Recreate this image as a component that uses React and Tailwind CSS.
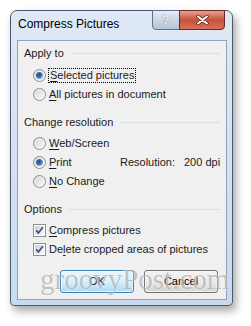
import React from 'react';

const font = { fontFamily: '"Liberation Sans", Arial, sans-serif' };

const Radio = ({ checked }) => (
  <svg width="13" height="13" viewBox="0 0 13 13" className="shrink-0">
    <defs>
      <linearGradient id="radioFill" x1="0" y1="0" x2="1" y2="1">
        <stop offset="0" stopColor="#cfcfcf" />
        <stop offset="1" stopColor="#ffffff" />
      </linearGradient>
      <radialGradient id="radioDot" cx="0.4" cy="0.4" r="0.6">
        <stop offset="0" stopColor="#2b4e7e" />
        <stop offset="0.55" stopColor="#3d6aa3" />
        <stop offset="1" stopColor="#8bbde6" />
      </radialGradient>
    </defs>
    <circle cx="6.5" cy="6.5" r="6" fill="url(#radioFill)" stroke="#8c8f93" />
    <circle cx="6.5" cy="6.5" r="4.5" fill="none" stroke="#f4f4f4" strokeWidth="0.8" />
    {checked && <circle cx="6.5" cy="6.5" r="3.6" fill="url(#radioDot)" />}
  </svg>
);

const Check = () => (
  <svg width="13" height="13" viewBox="0 0 13 13" className="shrink-0">
    <defs>
      <linearGradient id="checkFill" x1="0" y1="0" x2="1" y2="1">
        <stop offset="0" stopColor="#cdd3da" />
        <stop offset="1" stopColor="#f7f7f7" />
      </linearGradient>
    </defs>
    <rect x="0.5" y="0.5" width="12" height="12" fill="#fff" stroke="#8c8f93" />
    <rect x="2" y="2" width="9" height="9" fill="url(#checkFill)" />
    <path d="M3.2 6.4 L5.4 9 L9.8 3.2" fill="none" stroke="#3b4f86" strokeWidth="1.7" />
  </svg>
);

const Heading = ({ children }) => (
  <div className="flex items-center h-[18px] pl-[6px] pr-[6px]">
    <span>{children}</span>
    <div className="flex-1 h-px bg-[#d9dfe4] ml-[7px]" />
  </div>
);

const Row = ({ children }) => (
  <div className="flex items-center h-[19px] pl-[15px]">{children}</div>
);

const U = ({ children }) => <span className="underline underline-offset-[2px]">{children}</span>;

export default function App() {
  return (
    <div className="relative w-[251px] h-[326px] bg-white overflow-hidden pt-[10px] pl-[10px] text-[11px] text-[#1b1b1b]" style={font}>
      <div className="w-[223px] h-[296px] rounded-t-[7px] rounded-b-[4px] border border-[#4b5a6b] bg-gradient-to-b from-[#dfe9f5] to-[#c9daee] shadow-[3px_5px_8px_rgba(0,0,0,0.35)] flex flex-col">
        <div className="flex items-start h-[29px] pl-[7px] pr-[7px]">
          <span className="mt-[6px] leading-[15px] text-[12px] text-black">Compress Pictures</span>
          <div className="ml-auto -mt-px flex">
            <div className="w-[28px] h-[20px] border border-[#5f7188] rounded-bl-[4px] bg-gradient-to-b from-[#e6edf5] via-[#c9d6e4] to-[#b4c5d8] flex items-center justify-center text-[12px] font-bold text-[#f4f7fa] [text-shadow:0_0_1px_#44556a]">
              ?
            </div>
            <div className="w-[46px] h-[20px] -ml-px border border-[#6b2a20] rounded-br-[4px] bg-gradient-to-b from-[#e6a191] via-[#c6503c] to-[#d9705a] flex items-center justify-center">
              <svg width="13" height="10" viewBox="0 0 13 10">
                <path d="M2 1.5 L11 8.5 M11 1.5 L2 8.5" stroke="#5a1c14" strokeWidth="3.4" strokeLinecap="round" />
                <path d="M2 1.5 L11 8.5 M11 1.5 L2 8.5" stroke="#ffffff" strokeWidth="2" strokeLinecap="round" />
              </svg>
            </div>
          </div>
        </div>
        <div className="mx-[5px] ml-[6px] h-[260px] border border-[#8ea3ba] bg-[#f0f0f0] pt-[3px]">
          <Heading>Apply to</Heading>
          <div className="mt-[4px]">
            <Row>
              <Radio checked />
              <span className="ml-[2px] border border-dotted border-black px-px leading-[13px]"><U>S</U>elected pictures</span>
            </Row>
            <Row>
              <Radio />
              <span className="ml-[3px]"><U>A</U>ll pictures in document</span>
            </Row>
          </div>
          <div className="mt-[9px]">
            <Heading>Change resolution</Heading>
          </div>
          <div className="mt-[3px]">
            <Row>
              <Radio />
              <span className="ml-[3px]"><U>W</U>eb/Screen</span>
            </Row>
            <Row>
              <div className="flex items-center w-[87px]">
                <Radio checked />
                <span className="ml-[3px]"><U>P</U>rint</span>
              </div>
              <span className="w-[64px]">Resolution:</span>
              <span>200 dpi</span>
            </Row>
            <Row>
              <Radio />
              <span className="ml-[3px]"><U>N</U>o Change</span>
            </Row>
          </div>
          <div className="mt-[9px]">
            <Heading>Options</Heading>
          </div>
          <div className="mt-[3px]">
            <Row>
              <Check />
              <span className="ml-[3px]"><U>C</U>ompress pictures</span>
            </Row>
            <Row>
              <Check />
              <span className="ml-[3px]">De<U>l</U>ete cropped areas of pictures</span>
            </Row>
          </div>
          <div className="mt-[11px] flex justify-end gap-[10px] pr-[8px]">
            <button className="w-[74px] h-[23px] rounded-[3px] border border-[#3c7fb1] bg-gradient-to-b from-[#eaf6fd] via-[#d9f0fc] to-[#a7d9f5] shadow-[inset_0_0_0_1px_rgba(255,255,255,0.7)] text-[11px] text-black">
              OK
            </button>
            <button className="w-[74px] h-[23px] rounded-[3px] border border-[#707070] bg-gradient-to-b from-[#f2f2f2] via-[#ebebeb] to-[#d2d2d2] shadow-[inset_0_0_0_1px_rgba(255,255,255,0.7)] text-[11px] text-black">
              Cancel
            </button>
          </div>
        </div>
      </div>
      <div
        className="absolute left-[40px] top-[262px] text-[29px] leading-[34px] text-[#8c8c8c]/50 pointer-events-none [text-shadow:0_0_2px_rgba(255,255,255,0.8)]"
        style={{ fontFamily: '"Liberation Serif", "Times New Roman", serif' }}
      >
        groovyPost.com
      </div>
    </div>
  );
}
